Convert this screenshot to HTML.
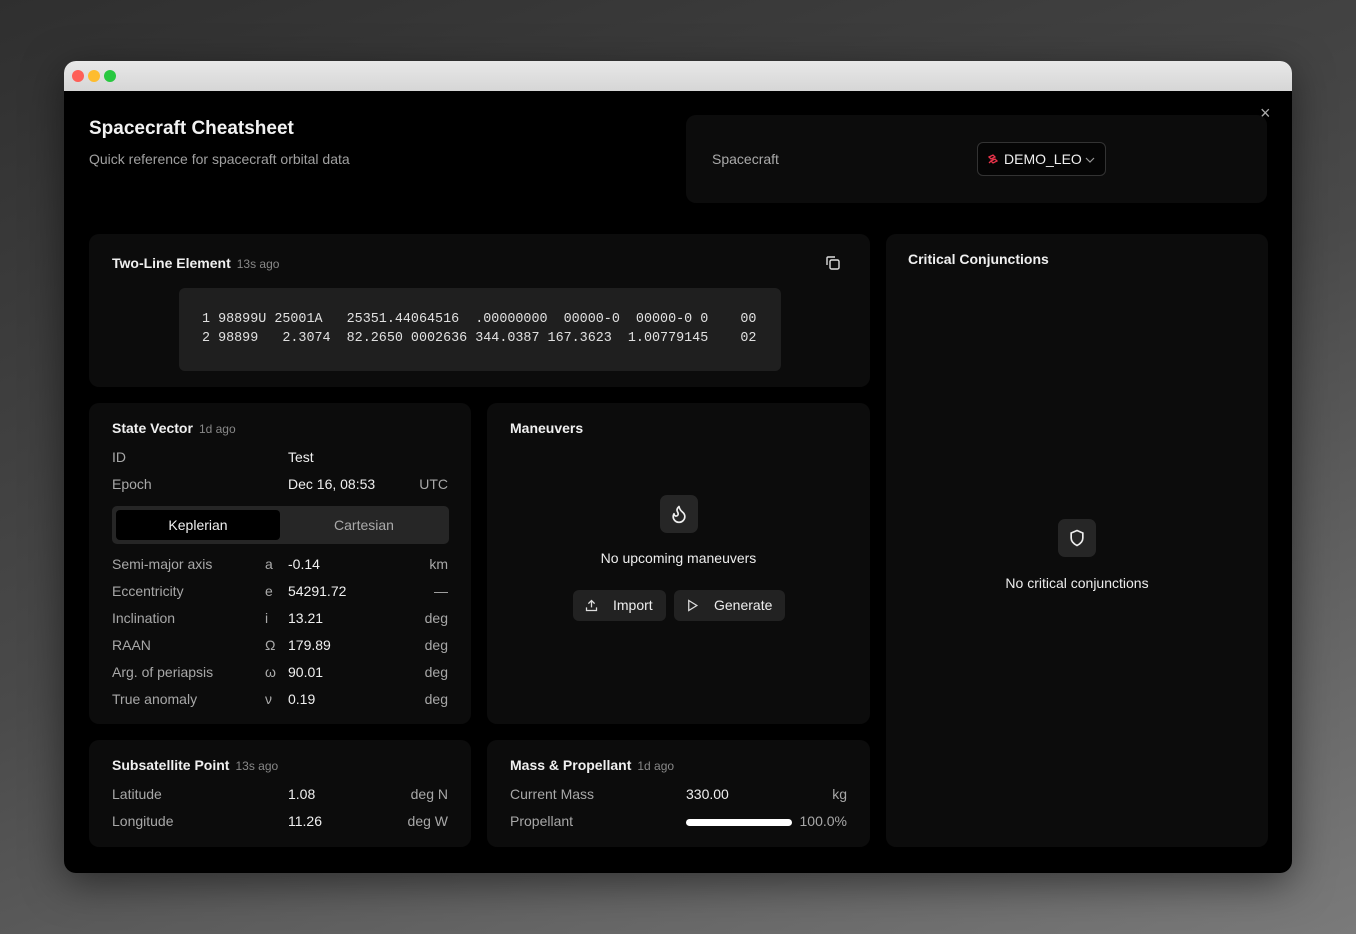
<!DOCTYPE html>
<html><head><style>
*{margin:0;padding:0;box-sizing:border-box}
body{width:1356px;height:934px;background:linear-gradient(160deg,#2f2f2f 0%,#4a4a4a 50%,#7a7a7a 100%);font-family:"Liberation Sans",sans-serif;position:relative;overflow:hidden;color:#e8e8e8}
.win{position:absolute;left:64px;top:61px;width:1228px;height:812px;border-radius:12px;overflow:hidden;background:#000;box-shadow:0 10px 40px rgba(0,0,0,.5)}
.tb{height:30px;background:linear-gradient(#e8e8e8,#d6d6d6);position:relative}
.dot{position:absolute;top:9px;width:12px;height:12px;border-radius:50%}
.card{position:absolute;background:#0c0c0c;border-radius:10px}
.abs{position:absolute}
.t{font-size:14px;font-weight:bold;color:#f0f0f0}
.ago{font-size:12px;color:#888;font-weight:normal;margin-left:6px}
.row{position:absolute;font-size:14px;left:23px;right:23px;height:20px}
.row .l{position:absolute;left:0;color:#a8a8a8}
.row .s{position:absolute;left:153px;color:#aaa}
.row .v{position:absolute;left:176px;color:#f0f0f0}
.row .u{position:absolute;right:0;color:#a8a8a8}
.btn{position:absolute;background:#222;border-radius:6px;font-size:14px;color:#eee;height:31px;line-height:31px}
</style></head><body>
<div class="win">
<div class="tb"><div class="dot" style="left:8px;background:#fe5f57"></div><div class="dot" style="left:24px;background:#febc2e"></div><div class="dot" style="left:40px;background:#28c840"></div></div>
<div class="abs" style="left:25px;top:57px;font-size:19px;font-weight:bold;color:#f2f2f2">Spacecraft Cheatsheet</div>
<div class="abs" style="left:25px;top:90px;font-size:14px;color:#a0a0a0">Quick reference for spacecraft orbital data</div>
<div class="abs" style="left:1196px;top:42px;font-size:18px;color:#aaa">×</div>
<div class="card" style="left:622px;top:54px;width:581px;height:88px">
 <div class="abs" style="left:26px;top:36px;font-size:14px;color:#aaa">Spacecraft</div>
 <div class="abs" style="left:291px;top:27px;width:129px;height:34px;border:1px solid #333;border-radius:6px;background:#050505;font-size:14px;line-height:32px;color:#f0f0f0">
  <svg class="abs" style="left:9px;top:10px" width="12" height="12" viewBox="0 0 12 12" fill="none" stroke="#e8334a" stroke-width="1.3"><path d="M2 4l4-2 2 2-4 2zM4 8l4-2 2 2-4 2zM5 5l2 2M2 10l2-2"/></svg>
  <span class="abs" style="left:26px;top:0">DEMO_LEO</span>
  <svg class="abs" style="left:107px;top:13px" width="10" height="8" viewBox="0 0 10 8" fill="none" stroke="#999" stroke-width="1.2"><path d="M1 2l4 4 4-4"/></svg>
 </div>
</div>
<div class="card" style="left:25px;top:173px;width:781px;height:153px">
 <div class="abs t" style="left:23px;top:21px">Two-Line Element<span class="ago">13s ago</span></div>
 <svg class="abs" style="left:736px;top:21px" width="16" height="16" viewBox="0 0 16 16" fill="none" stroke="#ddd" stroke-width="1.4"><rect x="5" y="5" width="9" height="9" rx="1.5"/><path d="M2 10V3a1 1 0 0 1 1-1h7"/></svg>
 <div class="abs" style="left:90px;top:54px;width:602px;height:83px;background:#1f1f1f;border-radius:6px;padding:22px 0 0 23px;font-family:'Liberation Mono',monospace;font-size:13.4px;line-height:19px;color:#e0e0e0;white-space:pre">1 98899U 25001A   25351.44064516  .00000000  00000-0  00000-0 0    00
2 98899   2.3074  82.2650 0002636 344.0387 167.3623  1.00779145    02</div>
</div>
<div class="card" style="left:822px;top:173px;width:382px;height:613px">
 <div class="abs t" style="left:22px;top:17px">Critical Conjunctions</div>
 <div class="abs" style="left:172px;top:285px;width:38px;height:38px;background:#262626;border-radius:7px"><svg style="margin:9px" width="20" height="20" viewBox="0 0 24 24" fill="none" stroke="#eee" stroke-width="2"><path d="M12 3l7 3v6c0 4-3 7-7 9-4-2-7-5-7-9V6z"/></svg></div>
 <div class="abs" style="left:0;width:382px;text-align:center;top:341px;font-size:14px;color:#eee">No critical conjunctions</div>
</div>
<div class="card" style="left:25px;top:342px;width:382px;height:321px">
 <div class="abs t" style="left:23px;top:17px">State Vector<span class="ago">1d ago</span></div>
 <div class="row" style="top:46px"><span class="l">ID</span><span class="v">Test</span></div>
 <div class="row" style="top:73px"><span class="l">Epoch</span><span class="v">Dec 16, 08:53</span><span class="u">UTC</span></div>
 <div class="abs" style="left:23px;top:103px;width:337px;height:38px;background:#262626;border-radius:5px">
  <div class="abs" style="left:4px;top:4px;width:164px;height:30px;background:#000;border-radius:4px;text-align:center;line-height:30px;font-size:14px;color:#f0f0f0">Keplerian</div>
  <div class="abs" style="left:170px;top:4px;width:164px;height:30px;text-align:center;line-height:30px;font-size:14px;color:#aaa">Cartesian</div>
 </div>
 <div class="row" style="top:153px"><span class="l">Semi-major axis</span><span class="s">a</span><span class="v">-0.14</span><span class="u">km</span></div>
 <div class="row" style="top:180px"><span class="l">Eccentricity</span><span class="s">e</span><span class="v">54291.72</span><span class="u">—</span></div>
 <div class="row" style="top:207px"><span class="l">Inclination</span><span class="s">i</span><span class="v">13.21</span><span class="u">deg</span></div>
 <div class="row" style="top:234px"><span class="l">RAAN</span><span class="s">Ω</span><span class="v">179.89</span><span class="u">deg</span></div>
 <div class="row" style="top:261px"><span class="l">Arg. of periapsis</span><span class="s">ω</span><span class="v">90.01</span><span class="u">deg</span></div>
 <div class="row" style="top:288px"><span class="l">True anomaly</span><span class="s">ν</span><span class="v">0.19</span><span class="u">deg</span></div>
</div>
<div class="card" style="left:423px;top:342px;width:383px;height:321px">
 <div class="abs t" style="left:23px;top:17px">Maneuvers</div>
 <div class="abs" style="left:173px;top:92px;width:38px;height:38px;background:#262626;border-radius:7px"><svg style="margin:9px" width="20" height="20" viewBox="0 0 24 24" fill="none" stroke="#eee" stroke-width="2" stroke-linecap="round" stroke-linejoin="round"><path d="M8.5 14.5A2.5 2.5 0 0 0 11 12c0-1.4-.5-2-1-3-1-2.1-.2-4 2-6 .5 2.5 2 4.9 4 6.5 2 1.6 3 3.5 3 5.5a7 7 0 1 1-14 0c0-1.2.4-2.3 1-3.3.3 1.6 1.4 2.8 2.5 2.8z"/></svg></div>
 <div class="abs" style="left:0;width:383px;text-align:center;top:147px;font-size:14px;color:#eee">No upcoming maneuvers</div>
 <div class="btn" style="left:86px;top:187px;width:93px"><svg class="abs" style="left:11px;top:8px" width="15" height="15" viewBox="0 0 24 24" fill="none" stroke="#ddd" stroke-width="2"><path d="M4 15v5h16v-5M12 15V4M7 9l5-5 5 5"/></svg><span style="position:absolute;left:40px">Import</span></div>
 <div class="btn" style="left:187px;top:187px;width:111px"><svg class="abs" style="left:11px;top:8px" width="15" height="15" viewBox="0 0 24 24" fill="none" stroke="#ddd" stroke-width="2"><path d="M6 4l13 8-13 8z"/></svg><span style="position:absolute;left:40px">Generate</span></div>
</div>
<div class="card" style="left:25px;top:679px;width:382px;height:107px">
 <div class="abs t" style="left:23px;top:17px">Subsatellite Point<span class="ago">13s ago</span></div>
 <div class="row" style="top:46px"><span class="l">Latitude</span><span class="v">1.08</span><span class="u">deg N</span></div>
 <div class="row" style="top:73px"><span class="l">Longitude</span><span class="v">11.26</span><span class="u">deg W</span></div>
</div>
<div class="card" style="left:423px;top:679px;width:383px;height:107px">
 <div class="abs t" style="left:23px;top:17px">Mass &amp; Propellant<span class="ago">1d ago</span></div>
 <div class="row" style="top:46px"><span class="l">Current Mass</span><span class="v">330.00</span><span class="u">kg</span></div>
 <div class="row" style="top:73px"><span class="l">Propellant</span><span class="u">100.0%</span></div>
 <div class="abs" style="left:199px;top:79px;width:106px;height:7px;background:#fff;border-radius:4px"></div>
</div>
</div>
</body></html>
